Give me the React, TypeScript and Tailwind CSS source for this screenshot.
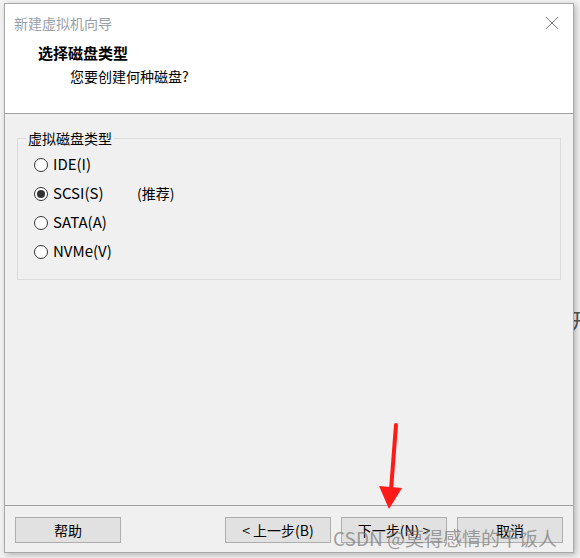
import React from "react";

const cjk = { fontFamily: '"Noto Sans CJK SC", "Noto Sans", sans-serif' };

function Radio({ label, checked, extra }: { label: string; checked?: boolean; extra?: string }) {
  return (
    <div className="flex h-[29px] items-center">
      <span className="flex h-[14px] w-[14px] items-center justify-center rounded-full border border-[#333333] bg-white">
        {checked && <span className="h-[8px] w-[8px] rounded-full bg-[#333333]" />}
      </span>
      <span className="ml-[5px] w-[84px] text-[15px] text-black">{label}</span>
      {extra && <span className="text-[14px] text-black">{extra}</span>}
    </div>
  );
}

function Btn({ children }: { children: React.ReactNode }) {
  return (
    <div className="flex h-[26px] w-[106px] items-center justify-center border border-[#adadad] bg-[#e1e1e1] text-[14px] text-black">
      {children}
    </div>
  );
}

export default function App() {
  return (
    <div className="relative h-[558px] w-[580px] overflow-hidden bg-[#f2f2f2]" style={cjk}>
      <div className="absolute left-[570px] top-[308px] text-[22px] leading-none text-[#555]">开</div>
      <div className="relative ml-[4px] mt-[3px] flex h-[550px] w-[570px] flex-col border border-[#a8a8a8] bg-[#f0f0f0] shadow-[2px_2px_6px_rgba(0,0,0,0.25)]">
        {/* header */}
        <div className="h-[110px] border-b border-[#a0a0a0] bg-white">
          <div className="flex h-[38px] items-center justify-between pl-[9px] pr-[14px]">
            <span className="text-[14px] text-[#9aa0a8]">新建虚拟机向导</span>
            <svg width="14" height="14" viewBox="0 0 14 14">
              <path d="M1 1L13 13M13 1L1 13" stroke="#777" strokeWidth="1" />
            </svg>
          </div>
          <div className="pl-[33px] text-[15px] font-bold leading-[22px] text-black">选择磁盘类型</div>
          <div className="pl-[65px] text-[14px] leading-[24px] text-black">您要创建何种磁盘?</div>
        </div>

        {/* body */}
        <div className="flex-1 px-[12px] pt-[14px]">
          <fieldset className="h-[152px] border border-[#dcdcdc]">
            <legend className="ml-[8px] px-[2px] text-[14px] text-black">虚拟磁盘类型</legend>
            <div className="pl-[16px] pt-[1px]">
              <Radio label="IDE(I)" />
              <Radio label="SCSI(S)" checked extra="(推荐)" />
              <Radio label="SATA(A)" />
              <Radio label="NVMe(V)" />
            </div>
          </fieldset>
        </div>

        {/* footer */}
        <div className="flex h-[47px] items-start border-t border-[#a0a0a0] pl-[10px] pt-[11px]">
          <Btn>帮助</Btn>
          <div className="ml-auto mr-[10px] flex gap-[10px]">
            <Btn>&lt; 上一步(B)</Btn>
            <Btn>下一步(N) &gt;</Btn>
            <Btn>取消</Btn>
          </div>
        </div>
      </div>

      {/* red annotation arrow */}
      <svg className="absolute left-[370px] top-[420px]" width="40" height="92" viewBox="0 0 40 92">
        <path d="M26 5 L21 70" stroke="#ff1a1a" strokeWidth="4" strokeLinecap="round" fill="none" />
        <path d="M9 66 L19 89 L32 68 Z" fill="#ff1a1a" />
      </svg>

      {/* watermark */}
      <div className="absolute left-[333px] top-[524px] text-[19px] leading-[28px] text-[rgba(120,120,120,0.7)]">
        CSDN @莫得感情的干饭人
      </div>
    </div>
  );
}
